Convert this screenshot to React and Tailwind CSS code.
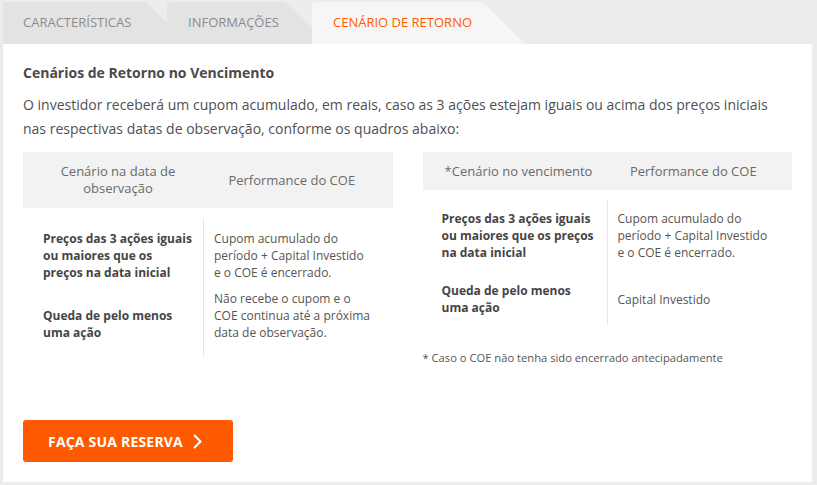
import React from "react";

const tabShape = "[clip-path:polygon(0_0,calc(100%_-_42px)_0,100%_100%,0_100%)]";

const Chevron = () => (
  <svg width="9" height="15" viewBox="0 0 9 15" fill="none">
    <polyline points="1.5,1.5 7.5,7.5 1.5,13.5" stroke="#fff" strokeWidth="2" strokeLinecap="round" strokeLinejoin="round" />
  </svg>
);

const App = () => {
  return (
    <div className="w-[817px] h-[485px] bg-[#ececec] pt-[2px] pl-[3px] pr-[5px] pb-[3px] font-['Open_Sans',sans-serif]">
      {/* tabs */}
      <div className="flex h-[42px]">
        <div className={`w-[185px] h-full bg-[#e3e3e3] rounded-tl-[3px] pl-[20px] flex items-center text-[13px] text-[#8c8c8c] ${tabShape}`}>
          CARACTERÍSTICAS
        </div>
        <div className={`-ml-[21px] w-[160px] h-full bg-[#e3e3e3] rounded-tl-[3px] pl-[21px] flex items-center text-[13px] text-[#8c8c8c] ${tabShape}`}>
          INFORMAÇÕES
        </div>
        <div className={`-ml-[15px] w-[213px] h-full bg-[#f6f6f6] rounded-tl-[3px] pl-[21px] flex items-center text-[13px] text-[#ff5a00] ${tabShape}`}>
          CENÁRIO DE RETORNO
        </div>
      </div>

      {/* card */}
      <div className="bg-white rounded-tr-[3px] h-[438px] px-[20px] pt-[19px]">
        <h2 className="text-[14px] leading-[20px] font-bold text-[#4a4a4a]">
          Cenários de Retorno no Vencimento
        </h2>
        <p className="mt-[10px] text-[14px] leading-[24px] text-[#505050]">
          O investidor receberá um cupom acumulado, em reais, caso as 3 ações estejam iguais ou acima dos preços iniciais nas respectivas datas de observação, conforme os quadros abaixo:
        </p>

        <div className="mt-[11px] flex gap-[30px] items-start text-[12px] leading-[17px]">
          {/* left table */}
          <div className="w-[370px]">
            <div className="h-[56px] bg-[#f2f2f2] flex items-center text-[13px] text-[#6a6a6a] text-center">
              <div className="w-[180px] pl-[20px] pr-[10px]">Cenário na data de observação</div>
              <div className="flex-1 pl-[11px] pr-[23px]">Performance do COE</div>
            </div>
            <div className="mt-[10px] grid grid-cols-[180px_1fr]">
              <div className="pl-[20px] pt-[12px] pb-[4px] font-bold text-[#454545] whitespace-nowrap">
                Preços das 3 ações iguais<br />ou maiores que os<br />preços na data inicial
              </div>
              <div className="border-l border-[#e6e6e6] pl-[10px] pt-[12px] pb-[4px] text-[#555] whitespace-nowrap">
                Cupom acumulado do<br />período + Capital Investido<br />e o COE é encerrado.
              </div>
              <div className="pl-[20px] pt-[5px] pb-[16px] font-bold text-[#454545] self-end whitespace-nowrap">
                Queda de pelo menos<br />uma ação
              </div>
              <div className="border-l border-[#e6e6e6] pl-[10px] pt-[5px] pb-[16px] text-[#555] whitespace-nowrap">
                Não recebe o cupom e o<br />COE continua até a próxima<br />data de observação.
              </div>
            </div>
          </div>

          {/* right table */}
          <div className="w-[370px]">
            <div className="h-[38px] bg-[#f2f2f2] flex items-center text-[13px] text-[#6a6a6a] text-center">
              <div className="w-[184px] pl-[19px] pr-[11px]">*Cenário no vencimento</div>
              <div className="flex-1 pl-[10px] pr-[22px]">Performance do COE</div>
            </div>
            <div className="mt-[10px] grid grid-cols-[184px_1fr]">
              <div className="pl-[19px] pt-[10px] pb-[11px] font-bold text-[#454545] whitespace-nowrap">
                Preços das 3 ações iguais<br />ou maiores que os preços<br />na data inicial
              </div>
              <div className="border-l border-[#e6e6e6] pl-[10px] pt-[10px] pb-[11px] text-[#555] whitespace-nowrap">
                Cupom acumulado do<br />período + Capital Investido<br />e o COE é encerrado.
              </div>
              <div className="pl-[19px] pt-[10px] pb-[9px] font-bold text-[#454545] whitespace-nowrap">
                Queda de pelo menos<br />uma ação
              </div>
              <div className="border-l border-[#e6e6e6] pl-[10px] pt-[10px] pb-[9px] text-[#555] flex items-center">
                Capital Investido
              </div>
            </div>
            <p className="mt-[24px] text-[11.2px] leading-[17px] text-[#555]">
              * Caso o COE não tenha sido encerrado antecipadamente
            </p>
          </div>
        </div>

        <button className="mt-[54px] w-[210px] h-[42px] bg-[#ff5a00] rounded-[3px] flex items-center pl-[25px] gap-[10px] text-white text-[14px] tracking-[0.2px] font-bold">
          FAÇA SUA RESERVA
          <Chevron />
        </button>
      </div>
    </div>
  );
};

export default App;
